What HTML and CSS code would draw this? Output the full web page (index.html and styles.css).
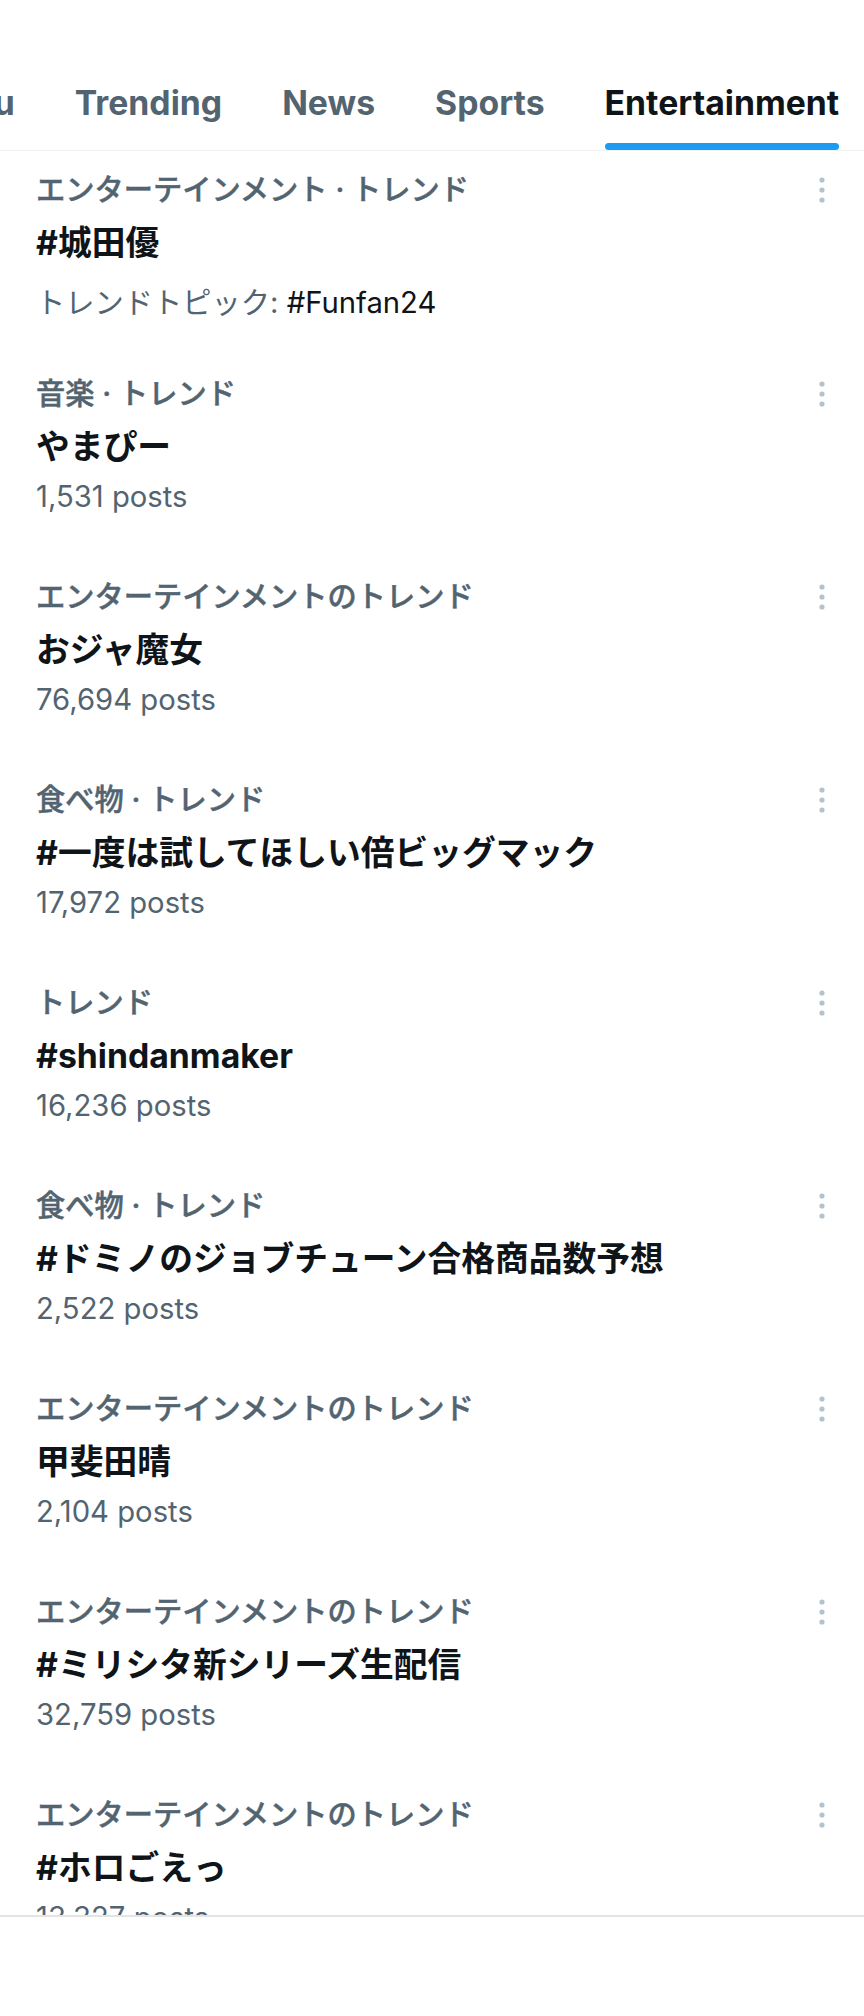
FILE: index.html
```html
<!DOCTYPE html>
<html lang="ja">
<head>
<meta charset="utf-8">
<title>Explore - Entertainment</title>
<link rel="stylesheet" href="styles.css">
</head>
<body>
<header class="tabs-bar">
  <nav class="tabs">
    <div class="tab"><span class="tab-label">For you</span><span class="tab-line"></span></div>
    <div class="tab"><span class="tab-label">Trending</span><span class="tab-line"></span></div>
    <div class="tab"><span class="tab-label">News</span><span class="tab-line"></span></div>
    <div class="tab"><span class="tab-label">Sports</span><span class="tab-line"></span></div>
    <div class="tab tab--active"><span class="tab-label">Entertainment</span><span class="tab-line"></span></div>
  </nav>
</header>

<main class="trends">
  <div class="trend trend--first">
    <div class="trend-body">
      <div class="trend-cat">エンターテインメント · トレンド</div>
      <div class="trend-title">#城田優</div>
      <div class="trend-sub trend-sub--topic">トレンドトピック: <span class="trend-topic">#Funfan24</span></div>
    </div>
    <svg class="more" viewBox="0 0 36 36"><circle cx="18" cy="8" r="2.6"/><circle cx="18" cy="18" r="2.6"/><circle cx="18" cy="28" r="2.6"/></svg>
  </div>

  <div class="trend">
    <div class="trend-body">
      <div class="trend-cat">音楽 · トレンド</div>
      <div class="trend-title">やまぴー</div>
      <div class="trend-sub">1,531 posts</div>
    </div>
    <svg class="more" viewBox="0 0 36 36"><circle cx="18" cy="8" r="2.6"/><circle cx="18" cy="18" r="2.6"/><circle cx="18" cy="28" r="2.6"/></svg>
  </div>

  <div class="trend">
    <div class="trend-body">
      <div class="trend-cat">エンターテインメントのトレンド</div>
      <div class="trend-title">おジャ魔女</div>
      <div class="trend-sub">76,694 posts</div>
    </div>
    <svg class="more" viewBox="0 0 36 36"><circle cx="18" cy="8" r="2.6"/><circle cx="18" cy="18" r="2.6"/><circle cx="18" cy="28" r="2.6"/></svg>
  </div>

  <div class="trend">
    <div class="trend-body">
      <div class="trend-cat">食べ物 · トレンド</div>
      <div class="trend-title">#一度は試してほしい倍ビッグマック</div>
      <div class="trend-sub">17,972 posts</div>
    </div>
    <svg class="more" viewBox="0 0 36 36"><circle cx="18" cy="8" r="2.6"/><circle cx="18" cy="18" r="2.6"/><circle cx="18" cy="28" r="2.6"/></svg>
  </div>

  <div class="trend">
    <div class="trend-body">
      <div class="trend-cat">トレンド</div>
      <div class="trend-title">#shindanmaker</div>
      <div class="trend-sub">16,236 posts</div>
    </div>
    <svg class="more" viewBox="0 0 36 36"><circle cx="18" cy="8" r="2.6"/><circle cx="18" cy="18" r="2.6"/><circle cx="18" cy="28" r="2.6"/></svg>
  </div>

  <div class="trend">
    <div class="trend-body">
      <div class="trend-cat">食べ物 · トレンド</div>
      <div class="trend-title">#ドミノのジョブチューン合格商品数予想</div>
      <div class="trend-sub">2,522 posts</div>
    </div>
    <svg class="more" viewBox="0 0 36 36"><circle cx="18" cy="8" r="2.6"/><circle cx="18" cy="18" r="2.6"/><circle cx="18" cy="28" r="2.6"/></svg>
  </div>

  <div class="trend">
    <div class="trend-body">
      <div class="trend-cat">エンターテインメントのトレンド</div>
      <div class="trend-title">甲斐田晴</div>
      <div class="trend-sub">2,104 posts</div>
    </div>
    <svg class="more" viewBox="0 0 36 36"><circle cx="18" cy="8" r="2.6"/><circle cx="18" cy="18" r="2.6"/><circle cx="18" cy="28" r="2.6"/></svg>
  </div>

  <div class="trend">
    <div class="trend-body">
      <div class="trend-cat">エンターテインメントのトレンド</div>
      <div class="trend-title">#ミリシタ新シリーズ生配信</div>
      <div class="trend-sub">32,759 posts</div>
    </div>
    <svg class="more" viewBox="0 0 36 36"><circle cx="18" cy="8" r="2.6"/><circle cx="18" cy="18" r="2.6"/><circle cx="18" cy="28" r="2.6"/></svg>
  </div>

  <div class="trend">
    <div class="trend-body">
      <div class="trend-cat">エンターテインメントのトレンド</div>
      <div class="trend-title">#ホロごえっ</div>
      <div class="trend-sub">13,327 posts</div>
    </div>
    <svg class="more" viewBox="0 0 36 36"><circle cx="18" cy="8" r="2.6"/><circle cx="18" cy="18" r="2.6"/><circle cx="18" cy="28" r="2.6"/></svg>
  </div>
</main>

<footer class="bottom-bar"></footer>
</body>
</html>
```

FILE: styles.css
```css
* { box-sizing: border-box; }

html, body {
  margin: 0;
  padding: 0;
  background: #ffffff;
}

body {
  font-family: Inter, "Noto Sans CJK JP", sans-serif;
  color: #0f1419;
  width: 864px;
  overflow: hidden;
}

.tabs-bar {
  height: 151px;
  border-bottom: 1px solid #eff3f4;
  overflow: hidden;
}

.tabs {
  display: flex;
  gap: 60px;
  margin-left: -108px;
  height: 150px;
}

.tab {
  display: flex;
  flex-direction: column;
  justify-content: flex-end;
  flex: none;
}

.tab-label {
  display: block;
  font-size: 33.75px;
  line-height: 40px;
  font-weight: 700;
  color: #536471;
  white-space: nowrap;
}

.tab-line {
  display: block;
  height: 7px;
  margin-top: 20px;
  border-radius: 4px;
  background: transparent;
}

.tab--active .tab-label { color: #0f1419; }
.tab--active .tab-line { background: #1d9bf0; }

.trend {
  display: flex;
  align-items: flex-start;
  padding: 28px 24px 36px 36px;
}

.trend--first {
  padding-top: 21px;
  padding-bottom: 27px;
}

.trend-body {
  flex: 1;
  min-width: 0;
}

.trend-cat {
  font-size: 29.25px;
  line-height: 36px;
  font-weight: 500;
  color: #536471;
  -webkit-text-stroke: 0.45px #536471;
  white-space: nowrap;
}

.trend-title {
  margin-top: 12px;
  font-size: 33.75px;
  line-height: 45px;
  font-weight: 700;
  color: #0f1419;
  white-space: nowrap;
}

.trend-sub {
  margin-top: 10px;
  font-size: 29.25px;
  line-height: 36px;
  color: #536471;
  white-space: nowrap;
}

.trend-sub--topic { margin-top: 20px; }

.trend-topic { color: #0f1419; }

.more {
  flex: none;
  width: 36px;
  height: 36px;
  fill: #b3c3cd;
}

.bottom-bar {
  position: fixed;
  left: 0;
  right: 0;
  bottom: 0;
  height: 101px;
  background: #ffffff;
  border-top: 2px solid #e4e4e4;
}
```
